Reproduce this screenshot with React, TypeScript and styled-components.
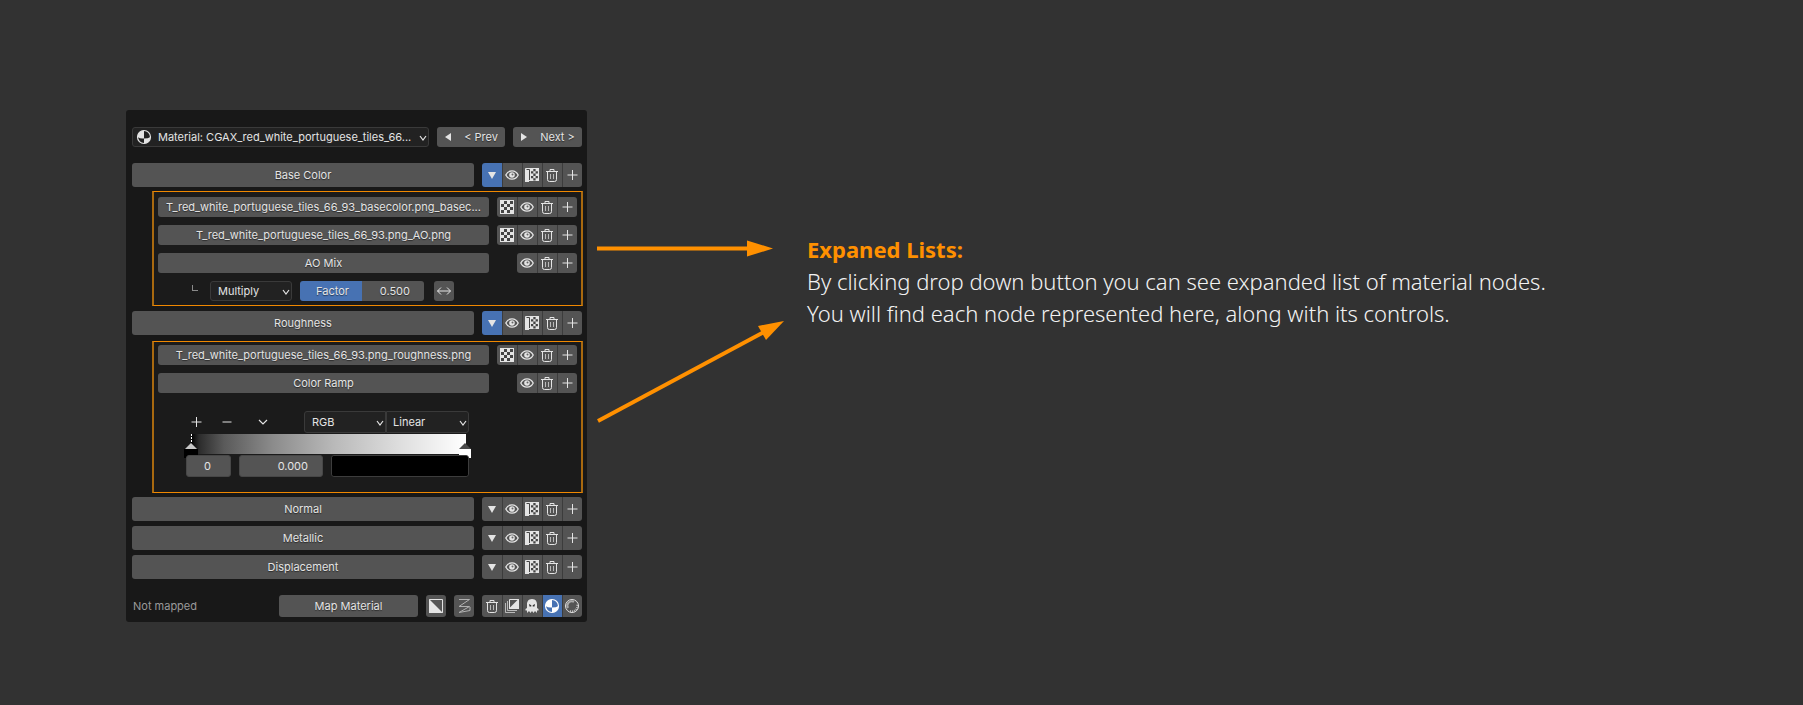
import React from "react";
import styled, { createGlobalStyle } from "styled-components";

const ui = {
  page: "#323232",
  panel: "#181818",
  box: "#1b1b1b",
  button: "#545454",
  field: "#222222",
  fieldBorder: "#3a3a3a",
  blue: "#4772b3",
  orange: "#ff9000",
  text: "#e4e4e4",
};

const GlobalStyle = createGlobalStyle`
  *, *::before, *::after { box-sizing: border-box; }
  body { margin: 0; background: ${ui.page}; }
  button, input, select { font: inherit; color: inherit; }
  svg { display: block; }
`;

const Page = styled.main`
  display: flex;
  align-items: flex-start;
  min-height: 100vh;
  padding: 110px 40px 40px 126px;
  background: ${ui.page};
`;

const Panel = styled.section`
  flex: 0 1 461px;
  min-width: 440px;
  padding: 17px 5px 5px 6px;
  border-radius: 3px;
  background: ${ui.panel};
  color: ${ui.text};
  font: 11px/16px Inter, "Noto Sans", sans-serif;
`;

const Row = styled.div<{ $top?: number; $gap?: number }>`
  display: flex;
  align-items: center;
  gap: ${(p) => p.$gap ?? 8}px;
  margin-top: ${(p) => p.$top ?? 0}px;
`;

const Button = styled.button<{ $h?: number; $w?: number; $grow?: boolean }>`
  display: flex;
  align-items: center;
  justify-content: center;
  gap: 8px;
  flex: ${(p) => (p.$grow ? "1 1 0" : `0 0 ${p.$w ?? 20}px`)};
  min-width: 0;
  height: ${(p) => p.$h ?? 20}px;
  padding: 0;
  border: 0;
  border-radius: 3px;
  background: ${ui.button};
  text-shadow: 0 1px 1px rgba(0, 0, 0, 0.5);
  white-space: nowrap;
  cursor: pointer;
`;

const Group = styled.div`
  display: flex;
  flex: none;
  border-radius: 3px;
  overflow: hidden;
`;

const IconButton = styled.button<{ $h: number; $active?: boolean }>`
  display: flex;
  align-items: center;
  justify-content: center;
  width: 20px;
  height: ${(p) => p.$h}px;
  padding: 0;
  border: 0;
  background: ${(p) => (p.$active ? ui.blue : ui.button)};
  cursor: pointer;
  & + & { box-shadow: inset 1px 0 #3c3c3c; }
`;

const SelectWrap = styled.label<{ $w?: number }>`
  position: relative;
  display: block;
  flex: ${(p) => (p.$w ? `0 0 ${p.$w}px` : "1 1 0")};
  min-width: 0;
`;

const Select = styled.select<{ $h?: number; $left?: number; $side?: "left" | "right" }>`
  appearance: none;
  display: block;
  width: 100%;
  height: ${(p) => p.$h ?? 20}px;
  padding: 0 12px 0 ${(p) => p.$left ?? 7}px;
  border: 1px solid ${ui.fieldBorder};
  border-radius: ${(p) => (p.$side === "left" ? "3px 0 0 3px" : p.$side === "right" ? "0 3px 3px 0" : "3px")};
  background: ${ui.field};
  outline: 0;
`;

const Lead = styled.span`
  position: absolute;
  left: 4px;
  top: 2px;
  pointer-events: none;
`;

const Tail = styled.span`
  position: absolute;
  right: 2px;
  top: 50%;
  margin-top: -3px;
  pointer-events: none;
`;

const NodeBox = styled.div<{ $top: number; $padTop: number; $padBottom: number }>`
  display: flex;
  flex-direction: column;
  gap: 8px;
  margin: ${(p) => p.$top}px -1px 0 20px;
  padding: ${(p) => p.$padTop}px 4px ${(p) => p.$padBottom}px;
  border: solid;
  border-width: 1px 2px;
  border-color: #f08800 #a9690f;
  background: ${ui.box};
`;

const Branch = styled.span`
  width: 6px;
  height: 6px;
  margin: 0 4px 6px 34px;
  border: solid #8a8a8a;
  border-width: 0 0 1px 1px;
`;

const Slider = styled.label`
  position: relative;
  display: block;
  flex: 0 0 124px;
  height: 20px;
  margin-right: 2px;
`;

const Range = styled.input`
  appearance: none;
  display: block;
  width: 100%;
  height: 20px;
  margin: 0;
  border-radius: 3px;
  background: linear-gradient(to right, ${ui.blue} 50%, ${ui.button} 50%);
  &::-webkit-slider-thumb { appearance: none; width: 1px; height: 20px; }
`;

const SliderText = styled.span`
  position: absolute;
  inset: 0;
  display: flex;
  align-items: center;
  justify-content: space-between;
  padding: 0 14px 0 16px;
  text-shadow: 0 1px 1px rgba(0, 0, 0, 0.5);
  pointer-events: none;
`;

const Ramp = styled.div`
  width: 283px;
  margin: 10px 0 0 28px;
`;

const Bare = styled.button<{ $w: number }>`
  display: flex;
  align-items: center;
  justify-content: center;
  flex: 0 0 ${(p) => p.$w}px;
  height: 22px;
  padding: 0;
  border: 0;
  background: none;
`;

const Spacer = styled.span`
  flex: 1;
`;

const RampBar = styled.div`
  position: relative;
  height: 20px;
  margin: 1px 3px 1px 5px;
  background: linear-gradient(to right, #000, #2c2c2c 3%, #5a5a5a 12%, #8c8c8c 30%, #b9b9b9 52%, #dedede 76%, #fff);
`;

const Stop = styled.svg<{ $end?: boolean }>`
  position: absolute;
  top: 0;
  ${(p) => (p.$end ? "right: -5px" : "left: -7px")};
`;

const Field = styled.input<{ $w: number; $align: "center" | "right" }>`
  position: relative;
  width: ${(p) => p.$w}px;
  height: 22px;
  padding: 0 ${(p) => (p.$align === "right" ? 14 : 2)}px 0 0;
  border: 1px solid #474747;
  border-radius: 3px;
  background: ${ui.button};
  text-align: ${(p) => p.$align};
`;

const Swatch = styled.input`
  appearance: none;
  position: relative;
  flex: 1;
  min-width: 0;
  height: 22px;
  padding: 0;
  border: 1px solid #3d3d3d;
  border-radius: 3px;
  background: #000;
  &::-webkit-color-swatch-wrapper { padding: 0; }
  &::-webkit-color-swatch { border: 0; border-radius: 2px; }
`;

const Status = styled.span`
  flex: 1;
  padding-left: 1px;
  color: #9a9a9a;
`;

const Arrows = styled.svg`
  flex: 0 0 220px;
`;

const Caption = styled.article`
  flex: 1;
  min-width: 0;
  padding-top: 123px;
  color: #f2f2f2;
  font: 300 22px/32px "Noto Sans", "Open Sans", sans-serif;
`;

const Heading = styled.h1`
  margin: 0;
  color: ${ui.orange};
  font-size: 22px;
  font-weight: 700;
  line-height: 32px;
`;

const Copy = styled.p`
  margin: 0;
`;

const Icon = ({ children }: { children: React.ReactNode }) => (
  <svg width="16" height="16" viewBox="0 0 16 16" fill="none" stroke={ui.text} aria-hidden="true">
    {children}
  </svg>
);

const EyeIcon = () => (
  <Icon>
    <path d="M1.800 8C4.500 2.400 11.500 2.400 14.200 8C11.500 13.600 4.500 13.600 1.800 8Z" strokeWidth="1.300" />
    <circle cx="8" cy="8" r="2.800" fill={ui.text} stroke="none" />
    <circle cx="8.500" cy="7.400" r="1" fill="#666" stroke="none" />
  </Icon>
);

const TrashIcon = () => (
  <Icon>
    <path d="M2 4.500H14M6 4.500V2.500H10V4.500M3.500 4.500V12.500Q3.500 14.500 5.500 14.500H10.500Q12.500 14.500 12.500 12.500V4.500" />
    <path d="M6.500 7V12M9.500 7V12" strokeOpacity=".7" />
  </Icon>
);

const PlusIcon = () => (
  <Icon>
    <path d="M8.500 3V13M3.500 8H13.500" />
  </Icon>
);

const MinusIcon = () => (
  <Icon>
    <path d="M3.500 8H12.500" />
  </Icon>
);

const ChevronIcon = ({ size = 8 }: { size?: number }) => (
  <svg width={size} height="8" viewBox={`0 0 ${size} 8`} fill="none" stroke={ui.text} aria-hidden="true">
    <path d={`M1 2L${size / 2} 6L${size - 1} 2`} strokeWidth="1.200" />
  </svg>
);

const DownIcon = () => (
  <Icon>
    <path d="M4 5H12L8 12Z" fill={ui.text} stroke="none" />
  </Icon>
);

const checkCells = (x0: number, y0: number, cols: number, rows: number, size: number, odd: number) => {
  let d = "";
  for (let r = 0; r < rows; r++)
    for (let c = 0; c < cols; c++)
      if ((r + c) % 2 === odd) d += `M${x0 + c * size} ${y0 + r * size}h${size}v${size}h${-size}Z`;
  return d;
};

const CheckerIcon = () => (
  <Icon>
    <path d="M1 1H15V15H1Z" fill={ui.text} stroke="none" />
    <path d={checkCells(2, 2, 4, 4, 3, 1)} fill="#444" stroke="none" />
  </Icon>
);

const NodeTextureIcon = () => (
  <Icon>
    <path d="M1 2Q1 1 2 1H15V14H5V15H1Z" fill={ui.text} stroke="none" />
    <path d="M2.500 2.500H5.500V13" stroke="#444" />
    <path d={checkCells(7, 2, 3, 5, 2.3, 1)} fill="#444" stroke="none" />
  </Icon>
);

const SwapIcon = () => (
  <Icon>
    <path d="M1.500 8H14.500M5 4.500L1.500 8L5 11.500M11 4.500L14.500 8L11 11.500" />
  </Icon>
);

const MaterialIcon = () => (
  <Icon>
    <circle cx="8" cy="8" r="6.500" strokeWidth="1.200" />
    <path
      d="M8 1.500A6.500 6.500 0 0 0 1.500 8Q4.500 10 8 9.500ZM8 9.500Q12 9.500 14.500 8A6.500 6.500 0 0 1 8 14.500Z"
      fill={ui.text}
      stroke="none"
    />
  </Icon>
);

const ShadedIcon = () => (
  <Icon>
    <circle cx="8" cy="8" r="6.500" stroke="#fff" strokeWidth="1.200" />
    <path
      d="M8 1.500A6.500 6.500 0 0 0 1.500 8Q4.500 10 8 9.500ZM8 9.500Q12 9.500 14.500 8A6.500 6.500 0 0 1 8 14.500Z"
      fill="#fff"
      stroke="none"
    />
  </Icon>
);

const DiagonalIcon = () => (
  <Icon>
    <path d="M1.500 1.500H14.500V14.500H1.500Z" />
    <path d="M1 1L15 15H1Z" fill={ui.text} stroke="none" />
  </Icon>
);

const StrokeIcon = () => (
  <Icon>
    <path d="M3 1.500H13.500L3 8.500H13.500L3 14.500M3 14.500L14 12.500V9" stroke="#b0b0b0" />
  </Icon>
);

const StackIcon = () => (
  <Icon>
    <path d="M5.500 1.500H14.500V10.500H5.500Z" />
    <path d="M5 11V10.500L14.500 1H15V11Z" fill={ui.text} stroke="none" />
    <path d="M3.500 3V12.500H13M1.500 5V14.500H11" strokeOpacity=".7" />
  </Icon>
);

const GhostIcon = () => (
  <Icon>
    <path
      d="M8 1C4 1 3 4 3 6.500V10L1.500 11V12.500H3V15L5 13L6.500 15L8 13L9.500 15L11 13L13 15V12.500H14.500V11L13 10V6.500C13 4 12 1 8 1Z"
      fill={ui.text}
      stroke="none"
    />
    <path d="M5 6L7.300 7.300V8.500H5.500ZM11 6L8.700 7.300V8.500H10.500Z" fill="#333" stroke="none" />
  </Icon>
);

const SphereIcon = () => (
  <Icon>
    <circle cx="8" cy="8" r="6.500" />
    <path d="M4 10A4.500 4.500 0 0 1 10 3.800" strokeWidth="2" strokeOpacity=".6" />
    <path d="M6 13A5.500 5.500 0 0 0 13 6" strokeWidth="2" strokeDasharray="1 1" strokeOpacity=".7" />
  </Icon>
);

const CornerArrow = ({ back }: { back?: boolean }) => (
  <svg width="8" height="10" viewBox="0 0 8 10" aria-hidden="true">
    <path d={back ? "M7 1V9L1 5Z" : "M1 1V9L7 5Z"} fill={ui.text} />
  </svg>
);

const PrevNext = styled(Button)`
  gap: 12px;
`;

const ChannelRow = ({ name, top, open }: { name: string; top: number; open?: boolean }) => (
  <Row $top={top}>
    <Button $grow $h={24}>{name}</Button>
    <Group>
      <IconButton $h={24} $active={open} aria-label={`Expand ${name}`} aria-expanded={!!open}><DownIcon /></IconButton>
      <IconButton $h={24} aria-label="Toggle visibility"><EyeIcon /></IconButton>
      <IconButton $h={24} aria-label="Texture"><NodeTextureIcon /></IconButton>
      <IconButton $h={24} aria-label="Delete"><TrashIcon /></IconButton>
      <IconButton $h={24} aria-label="Add"><PlusIcon /></IconButton>
    </Group>
  </Row>
);

const NodeActions = styled.div`
  display: flex;
  justify-content: flex-end;
  width: 88px;
`;

const NodeRow = ({ name, texture }: { name: string; texture?: boolean }) => (
  <Row $gap={0}>
    <Button $grow>{name}</Button>
    <NodeActions>
      <Group>
        {texture && <IconButton $h={20} aria-label="Texture"><CheckerIcon /></IconButton>}
        <IconButton $h={20} aria-label="Toggle visibility"><EyeIcon /></IconButton>
        <IconButton $h={20} aria-label="Delete"><TrashIcon /></IconButton>
        <IconButton $h={20} aria-label="Add"><PlusIcon /></IconButton>
      </Group>
    </NodeActions>
  </Row>
);

export default function App() {
  return (
    <>
      <GlobalStyle />
      <Page>
        <Panel aria-label="Material channels">
          <Row>
            <SelectWrap>
              <Lead><MaterialIcon /></Lead>
              <Select $left={25} aria-label="Material">
                <option>Material: CGAX_red_white_portuguese_tiles_66...</option>
              </Select>
              <Tail><ChevronIcon /></Tail>
            </SelectWrap>
            <PrevNext $w={68}><CornerArrow back />&lt; Prev</PrevNext>
            <PrevNext $w={69}><CornerArrow />Next &gt;</PrevNext>
          </Row>

          <ChannelRow name="Base Color" top={16} open />
          <NodeBox $top={4} $padTop={5} $padBottom={4}>
            <NodeRow name="T_red_white_portuguese_tiles_66_93_basecolor.png_basec..." texture />
            <NodeRow name="T_red_white_portuguese_tiles_66_93.png_AO.png" texture />
            <NodeRow name="AO Mix" />
            <Row>
              <Branch />
              <SelectWrap $w={82}>
                <Select aria-label="Blend mode"><option>Multiply</option></Select>
                <Tail><ChevronIcon /></Tail>
              </SelectWrap>
              <Slider>
                <Range type="range" min="0" max="1" step="0.001" defaultValue="0.5" />
                <SliderText><span>Factor</span><span>0.500</span></SliderText>
              </Slider>
              <Button aria-label="Swap inputs"><SwapIcon /></Button>
            </Row>
          </NodeBox>

          <ChannelRow name="Roughness" top={5} open />
          <NodeBox $top={6} $padTop={3} $padBottom={15}>
            <NodeRow name="T_red_white_portuguese_tiles_66_93.png_roughness.png" texture />
            <NodeRow name="Color Ramp" />
            <Ramp>
              <Row $gap={0}>
                <Bare $w={20} aria-label="Add stop"><PlusIcon /></Bare>
                <Bare $w={42} aria-label="Remove stop"><MinusIcon /></Bare>
                <Bare $w={30} aria-label="Ramp options"><ChevronIcon size={10} /></Bare>
                <Spacer />
                <SelectWrap $w={82}>
                  <Select $h={22} $side="left" aria-label="Color mode"><option>RGB</option></Select>
                  <Tail><ChevronIcon /></Tail>
                </SelectWrap>
                <SelectWrap $w={83}>
                  <Select $h={22} $side="right" $left={6} aria-label="Interpolation"><option>Linear</option></Select>
                  <Tail><ChevronIcon /></Tail>
                </SelectWrap>
              </Row>
              <RampBar>
                <Stop width="14" height="24" aria-hidden="true">
                  <path d="M7.500 0V9" stroke="#fff" strokeDasharray="2 1" />
                  <path d="M0 15H14V24H0Z" fill="#000" />
                  <path d="M1 15L7 9L13 15Z" fill="#c8c8c8" />
                </Stop>
                <Stop $end width="12" height="24" aria-hidden="true">
                  <path d="M0 15H12V24H0Z" fill="#fff" />
                  <path d="M0 15L6 9L12 15Z" fill="#4a4a4a" />
                </Stop>
              </RampBar>
              <Row>
                <Field $w={45} $align="center" defaultValue="0" aria-label="Stop index" />
                <Field $w={84} $align="right" defaultValue="0.000" aria-label="Stop position" />
                <Swatch type="color" defaultValue="#000000" aria-label="Stop color" />
              </Row>
            </Ramp>
          </NodeBox>

          <ChannelRow name="Normal" top={4} />
          <ChannelRow name="Metallic" top={5} />
          <ChannelRow name="Displacement" top={5} />

          <Row $top={16}>
            <Status>Not mapped</Status>
            <Button $w={139} $h={22}>Map Material</Button>
            <Button $h={22} aria-label="Invert"><DiagonalIcon /></Button>
            <Button $h={22} aria-label="Strokes"><StrokeIcon /></Button>
            <Group>
              <IconButton $h={22} aria-label="Delete material"><TrashIcon /></IconButton>
              <IconButton $h={22} aria-label="Duplicate"><StackIcon /></IconButton>
              <IconButton $h={22} aria-label="Ghost"><GhostIcon /></IconButton>
              <IconButton $h={22} $active aria-label="Material preview"><ShadedIcon /></IconButton>
              <IconButton $h={22} aria-label="Rendered preview"><SphereIcon /></IconButton>
            </Group>
          </Row>
        </Panel>

        <Arrows width="220" height="512" viewBox="0 0 220 512" fill={ui.orange} stroke={ui.orange} aria-hidden="true">
          <path d="M10 138.500H162" strokeWidth="4" />
          <path d="M160 130.500L186 138.500L160 146.500Z" stroke="none" />
          <path d="M11 311L177 222" strokeWidth="4" />
          <path d="M197 211L171 216L179 230Z" stroke="none" />
        </Arrows>

        <Caption>
          <Heading>Expaned Lists:</Heading>
          <Copy>
            By clicking drop down button you can see expanded list of material nodes.
            <br />
            You will find each node represented here, along with its controls.
          </Copy>
        </Caption>
      </Page>
    </>
  );
}
